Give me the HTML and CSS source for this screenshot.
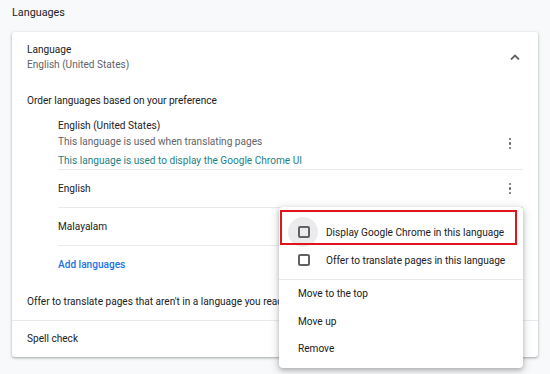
FILE: index.html
```html
<!DOCTYPE html>
<html lang="en">
<head>
    <meta charset="UTF-8">
    <title>Languages</title>
    <link rel="stylesheet" href="styles.css">
</head>
<body>
    <div class="page">
        <h2 class="page-title">Languages</h2>

        <div class="card">
            <div class="card-head">
                <div>
                    <div class="label">Language</div>
                    <div class="sub">English (United States)</div>
                </div>
                <svg class="chevron" width="10" height="6" viewBox="0 0 10 6">
                    <path d="M1 5.5 L5 1.5 L9 5.5" fill="none" stroke="#5f6368" stroke-width="1.8"/>
                </svg>
            </div>

            <div class="order-label">Order languages based on your preference</div>

            <div class="lang-list">
                <div class="lang-row first">
                    <div>
                        <div class="lang-name">English (United States)</div>
                        <div class="sub">This language is used when translating pages</div>
                        <div class="ui-note">This language is used to display the Google Chrome UI</div>
                    </div>
                    <span class="dots"><i></i><i></i><i></i></span>
                </div>
                <div class="lang-row">
                    <div class="lang-name">English</div>
                    <span class="dots"><i></i><i></i><i></i></span>
                </div>
                <div class="lang-row">
                    <div class="lang-name">Malayalam</div>
                    <span class="dots"><i></i><i></i><i></i></span>
                </div>
                <div class="add-row">Add languages</div>
            </div>

            <div class="offer-row">Offer to translate pages that aren't in a language you read</div>
            <div class="spell-row">Spell check</div>

            <div class="menu">
                <div class="menu-item check-item">
                    <span class="ripple"></span>
                    <span class="checkbox"></span>
                    <span>Display Google Chrome in this language</span>
                </div>
                <div class="menu-item check-item">
                    <span class="checkbox"></span>
                    <span>Offer to translate pages in this language</span>
                </div>
                <div class="menu-sep"></div>
                <div class="menu-item plain">Move to the top</div>
                <div class="menu-item plain">Move up</div>
                <div class="menu-item plain">Remove</div>
                <div class="highlight"></div>
            </div>
        </div>
    </div>
</body>
</html>
```

FILE: styles.css
```css
body {
    margin: 0;
    background: #f8f9fa;
    font-family: Roboto, "Liberation Sans", sans-serif;
    font-size: 10.1px;
    color: #202124;
}
.page {
    padding: 0 12px;
    height: 374px;
}
.page-title {
    margin: 0;
    height: 32px;
    line-height: 26px;
    font-size: 10.8px;
    font-weight: 400;
}
.card {
    position: relative;
    width: 526px;
    height: 325px;
    background: #fff;
    border-radius: 3px;
    box-shadow: 0 1px 2px rgba(60, 64, 67, 0.3), 0 1px 3px 1px rgba(60, 64, 67, 0.12);
}
.card-head {
    display: flex;
    justify-content: space-between;
    align-items: center;
    padding: 10px 18px 0 15px;
    line-height: 15px;
}
.sub {
    color: #5f6368;
}
.label, .lang-name {
    color: #202124;
}
.order-label {
    padding: 0 15px;
    margin-top: 21px;
    line-height: 15px;
}
.lang-list {
    margin: 0 15px 0 46px;
}
.lang-row {
    display: flex;
    justify-content: space-between;
    align-items: center;
    height: 37px;
    border-bottom: 1px solid #e8eaed;
}
.lang-row.first {
    height: auto;
    margin-top: 10px;
    line-height: 16px;
}
.ui-note {
    margin-top: 3px;
    color: #1e7f86;
}
.dots {
    display: flex;
    flex-direction: column;
    gap: 2px;
    margin-right: 12px;
}
.dots i {
    width: 2.5px;
    height: 2.5px;
    border-radius: 50%;
    background: #5f6368;
}
.add-row {
    height: 38px;
    line-height: 38px;
    color: #1a73e8;
    font-weight: 500;
}
.offer-row {
    padding: 0 15px;
    height: 36px;
    line-height: 36px;
    border-bottom: 1px solid #e8eaed;
}
.spell-row {
    padding: 0 15px;
    height: 36px;
    line-height: 36px;
}
.menu {
    position: absolute;
    left: 267px;
    top: 175px;
    width: 244px;
    height: 161px;
    padding-top: 11px;
    box-sizing: border-box;
    background: #fff;
    border-radius: 4px;
    box-shadow: 0 2px 4px rgba(60, 64, 67, 0.3), 0 2px 8px 2px rgba(60, 64, 67, 0.15);
}
.menu-item {
    position: relative;
    display: flex;
    align-items: center;
    height: 28px;
    padding-left: 19px;
}
.menu-item.plain {
    height: 27.5px;
}
.check-item .checkbox {
    position: relative;
    width: 8px;
    height: 8px;
    border: 2px solid #5f6368;
    border-radius: 2px;
    margin-right: 16px;
}
.ripple {
    position: absolute;
    left: 9px;
    top: -1px;
    width: 30px;
    height: 30px;
    border-radius: 50%;
    background: #ebebeb;
}
.menu-sep {
    height: 1px;
    margin-top: 5px;
    background: #e8eaed;
}
.highlight {
    position: absolute;
    left: 1px;
    top: 3px;
    width: 233px;
    height: 31px;
    border: 2px solid #e3131b;
}
```
